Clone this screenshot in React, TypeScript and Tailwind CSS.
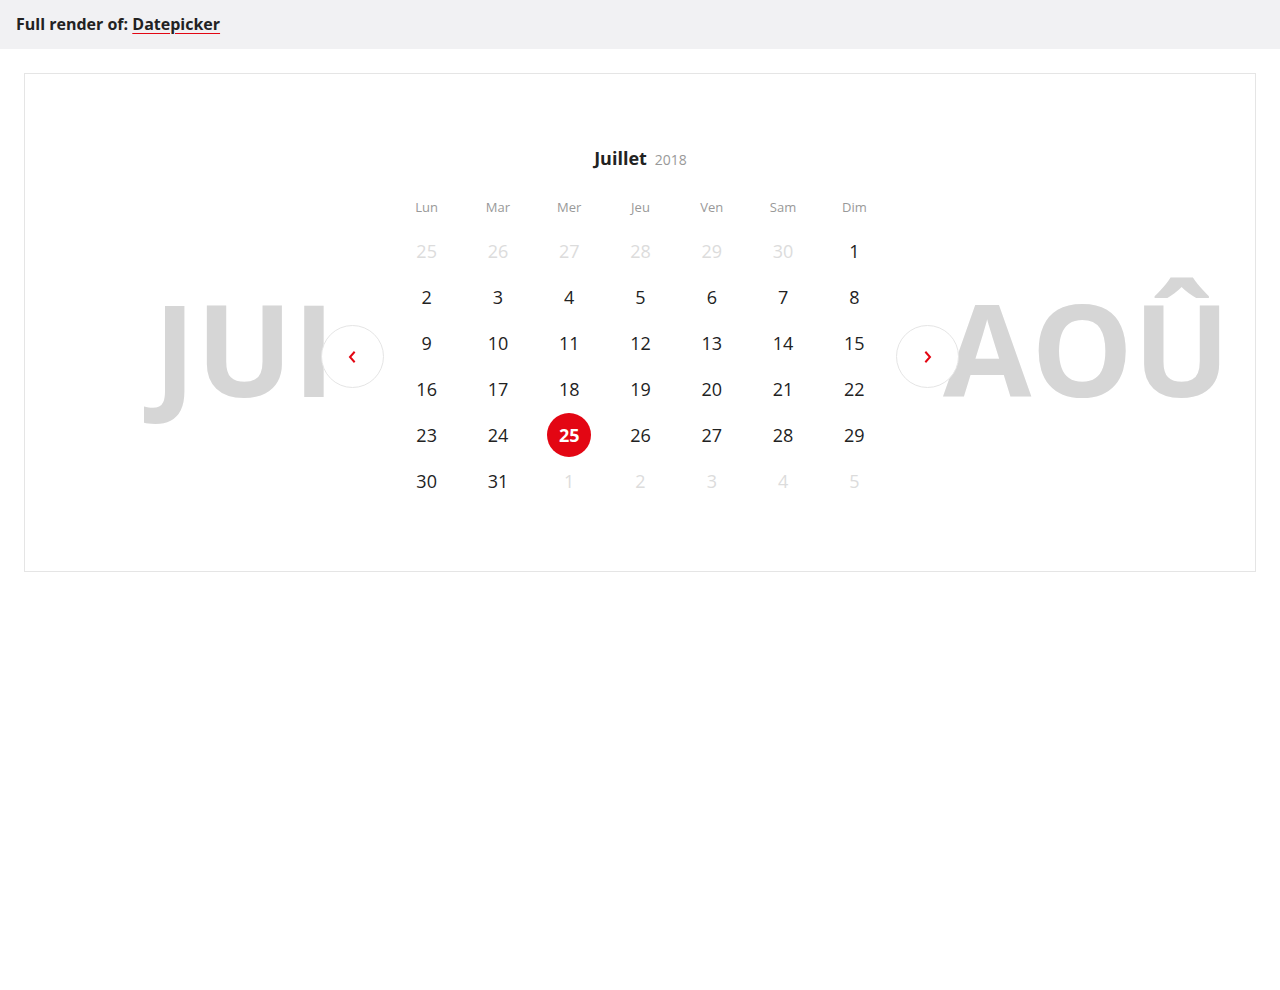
import React from "react";

const days = ["Lun", "Mar", "Mer", "Jeu", "Ven", "Sam", "Dim"];
type Cell = { d: number; muted?: boolean; sel?: boolean };
const weeks: Cell[][] = [
  [{ d: 25, muted: true }, { d: 26, muted: true }, { d: 27, muted: true }, { d: 28, muted: true }, { d: 29, muted: true }, { d: 30, muted: true }, { d: 1 }],
  [2, 3, 4, 5, 6, 7, 8].map((d) => ({ d })),
  [9, 10, 11, 12, 13, 14, 15].map((d) => ({ d })),
  [16, 17, 18, 19, 20, 21, 22].map((d) => ({ d })),
  [23, 24, 25, 26, 27, 28, 29].map((d) => ({ d, sel: d === 25 })),
  [{ d: 30 }, { d: 31 }, { d: 1, muted: true }, { d: 2, muted: true }, { d: 3, muted: true }, { d: 4, muted: true }, { d: 5, muted: true }],
];

function Chevron({ dir }: { dir: "l" | "r" }) {
  return (
    <svg width="8" height="12" viewBox="0 0 8 12" fill="none">
      <path
        d={dir === "l" ? "M6 1.5 L2 6 L6 10.5" : "M2 1.5 L6 6 L2 10.5"}
        stroke="#e30613"
        strokeWidth="2"
        strokeLinecap="square"
      />
    </svg>
  );
}

export default function App() {
  return (
    <div className="min-h-[990px] bg-white text-[#222]" style={{ fontFamily: '"Open Sans", sans-serif' }}>
      <div className="h-[49px] bg-[#f1f1f3] flex items-center px-4 pb-[1px]">
        <span className="text-[16px] font-bold text-[#222]">
          Full render of:{" "}
          <span className="underline decoration-[#e30613] underline-offset-[3px]">Datepicker</span>
        </span>
      </div>
      <div className="px-6 pt-6">
        <div className="border border-[#e5e5e5] h-[499px] pt-[71px] overflow-hidden">
          <div className="flex justify-center items-start">
            <div className="pt-[180px] relative">
              <span className="absolute right-[49px] top-[139px] text-[#d6d6d6] font-bold text-[128px] leading-[128px] select-none whitespace-nowrap">JUI</span>
              <button className="relative z-10 w-[63px] h-[63px] rounded-full border border-[#e5e5e5] bg-white flex items-center justify-center pr-[2px]">
                <Chevron dir="l" />
              </button>
            </div>
            <div className="w-[500px] mx-[6px] relative z-10 pl-[1px]">
              <div className="flex items-baseline justify-center gap-2 h-[24px]">
                <span className="text-[18px] font-bold text-[#222]">Juillet</span>
                <span className="text-[14px] text-[#999]">2018</span>
              </div>
              <div className="grid grid-cols-7 mt-[28px]">
                {days.map((d) => (
                  <div key={d} className="text-center text-[13px] text-[#999] h-[20px] leading-[20px]">{d}</div>
                ))}
              </div>
              <div className="mt-[11px]">
                {weeks.map((w, i) => (
                  <div key={i} className="grid grid-cols-7">
                    {w.map((c, j) => (
                      <div key={j} className="h-[46px] flex items-center justify-center">
                        {c.sel ? (
                          <span className="w-[44px] h-[44px] rounded-full bg-[#e30613] text-white font-bold text-[18px] flex items-center justify-center">{c.d}</span>
                        ) : (
                          <span className={`text-[18px] ${c.muted ? "text-[#dcdcdc]" : "text-[#222]"}`}>{c.d}</span>
                        )}
                      </div>
                    ))}
                  </div>
                ))}
              </div>
            </div>
            <div className="pt-[180px] relative">
              <span className="absolute left-[47px] top-[139px] text-[#d6d6d6] font-bold text-[128px] leading-[128px] select-none whitespace-nowrap">AOÛ</span>
              <button className="relative z-10 w-[63px] h-[63px] rounded-full border border-[#e5e5e5] bg-white flex items-center justify-center">
                <Chevron dir="r" />
              </button>
            </div>
          </div>
        </div>
      </div>
    </div>
  );
}
